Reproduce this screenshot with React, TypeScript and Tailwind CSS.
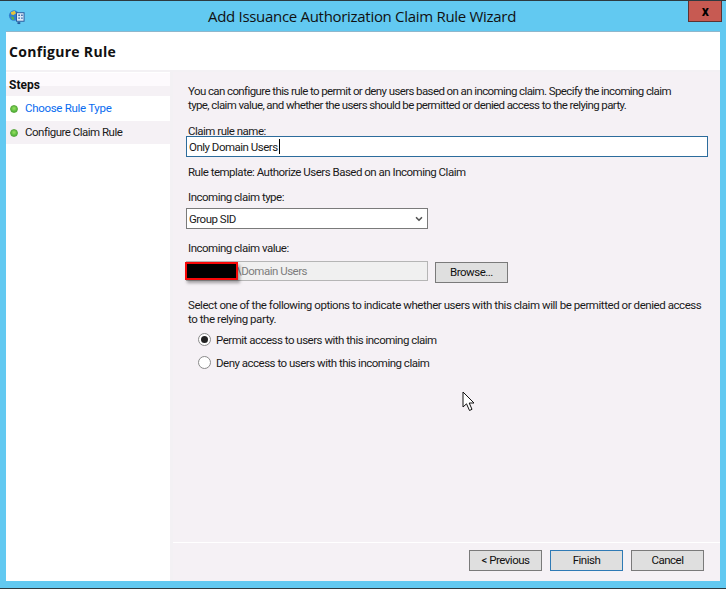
import { ChevronDown } from "lucide-react";

function WizardIcon() {
  return (
    <svg width="17" height="17" viewBox="0 0 18 18" className="shrink-0">
      <circle cx="6.5" cy="8" r="5.5" fill="#2f7fd0" />
      <path d="M3 4.5 L7 3 L8.5 5.5 L6 7.5 L3.5 7 Z" fill="#e8c53a" />
      <path d="M3 9 L6 9.5 L6.5 12.5 L4.5 12.5 Z" fill="#58b14a" />
      <rect x="9" y="5" width="8" height="9" fill="#dbe9f7" stroke="#23579c" />
      <path d="M11 7h1.5v1.5H11zM14 7h1.5v1.5H14zM11 10h1.5v1.5H11zM14 10h1.5v1.5H14z" fill="#23579c" />
      <path d="M10 15h3v2h-3z" fill="#23579c" />
    </svg>
  );
}

function Dot() {
  return (
    <span className="h-[8px] w-[8px] shrink-0 rounded-full border border-[#5aa83c] bg-[radial-gradient(circle_at_50%_40%,#9ae05f,#35a52e)]" />
  );
}

function Radio({ checked, label }: { checked?: boolean; label: string }) {
  return (
    <div className="flex h-[15px] items-center gap-[5px]">
      <span className="flex h-[13px] w-[13px] shrink-0 items-center justify-center rounded-full border border-[#8a8a8a] bg-white">
        {checked ? <span className="h-[7px] w-[7px] rounded-full bg-[#222]" /> : null}
      </span>
      <span>{label}</span>
    </div>
  );
}

function Btn({ label, primary }: { label: string; primary?: boolean }) {
  return (
    <button
      className={`h-[21px] w-[73px] border bg-[#dfdfdf] leading-none text-[#111] ${
        primary ? "border-[#2f7ab5]" : "border-[#7a7a7a]"
      }`}
    >
      {label}
    </button>
  );
}

export default function App() {
  return (
    <div className="flex h-[589px] w-[726px] flex-col overflow-hidden border-t border-[#2d3a40] bg-[#62c9f1] font-['Roboto',sans-serif] text-[11.5px] leading-[14px] tracking-[-0.5px] text-[#1a1a1a]">
      {/* title bar */}
      <div className="flex h-[30px] shrink-0">
        <div className="flex w-[688px] items-center pl-[8px]">
          <WizardIcon />
          <div className="flex-1 pl-[11px] text-center font-['Open_Sans',sans-serif] text-[15px] tracking-[-0.3px] text-[#111]">
            Add Issuance Authorization Claim Rule Wizard
          </div>
        </div>
        <div className="flex h-[21px] w-[34px] items-center justify-center border border-t-0 border-[#5c3232] bg-[#c75a52] text-[14px] leading-none font-bold text-black">
          x
        </div>
      </div>

      {/* window client */}
      <div className="ml-[6px] flex h-[550px] w-[714px] flex-col border-t border-[#8fb7cc] bg-white">
        <div className="flex h-[38px] shrink-0 items-center pl-[3px] pt-[2px] font-['Open_Sans',sans-serif] text-[14px] font-bold tracking-[0.3px] text-[#111]">
          Configure Rule
        </div>
        <div className="h-[2px] shrink-0 bg-[#f3f1f4]" />
        <div className="flex min-h-0 flex-1">
          {/* steps */}
          <div className="w-[164px] shrink-0 pt-[1px]">
            <div className="h-[23px] bg-[linear-gradient(#fdfafd_0,#fdfafd_13px,#f5f1f5_13px)] pl-[3px] pt-[5px] text-[12px] font-bold tracking-[0px] text-[#111]">
              Steps
            </div>
            <div className="flex h-[25px] items-center gap-[7px] pl-[4px] tracking-[-0.3px] text-[#0a6cf0]">
              <Dot />
              <span className="-mt-[2px]">Choose Rule Type</span>
            </div>
            <div className="flex h-[23px] items-center gap-[7px] bg-[#f5f1f5] pl-[4px]">
              <Dot />
              <span className="-mt-[2px]">Configure Claim Rule</span>
            </div>
          </div>
          <div className="w-[3px] shrink-0 bg-[#f3f1f4]" />

          {/* main panel */}
          <div className="relative flex min-w-0 flex-1 flex-col bg-[#f5f1f5]">
            <div className="flex-1 pl-[15px] pt-[12px]">
              <p className="tracking-[-0.6px]">
                You can configure this rule to permit or deny users based on an incoming claim. Specify the incoming claim
                <br />
                type, claim value, and whether the users should be permitted or denied access to the relying party.
              </p>
              <div className="mt-[12px]">Claim rule name:</div>
              <div className="-ml-[2px] -mt-[2px] flex h-[21px] w-[522px] items-center border border-[#2c6c9c] bg-white pl-[2px]">
                Only Domain Users
                <span className="ml-[1px] h-[15px] w-px bg-black" />
              </div>
              <div className="mt-[8px]">Rule template: Authorize Users Based on an Incoming Claim</div>
              <div className="mt-[11px]">Incoming claim type:</div>
              <div className="-ml-[2px] mt-[4px] flex h-[21px] w-[242px] items-center justify-between border border-[#7a7a7a] bg-white pl-[2px] pr-[3px]">
                Group SID
                <ChevronDown size={10} strokeWidth={4} className="text-[#555]" />
              </div>
              <div className="mt-[12px]">Incoming claim value:</div>
              <div className="-ml-[2px] mt-[6px] flex items-start gap-[7px]">
                <div className="relative flex h-[20px] w-[242px] items-center border border-[#b5b5b5] bg-[#f0f0f0] pl-[50px] text-[#7d7d7d]">
                  \Domain Users
                  <div className="absolute -left-[2px] top-0 h-[18px] w-[53px] border-2 border-[#f80808] bg-black shadow-[2px_3px_3px_rgba(0,0,0,0.35)]" />
                </div>
                <button className="mt-px h-[21px] w-[73px] border border-[#7a7a7a] bg-[#dfdfdf] leading-none text-[#111]">
                  Browse...
                </button>
              </div>
              <p className="mt-[15px] tracking-[-0.44px]">
                Select one of the following options to indicate whether users with this claim will be permitted or denied access
                <br />
                to the relying party.
              </p>
              <div className="mt-[6px] flex flex-col gap-[8px] pl-[10px]">
                <Radio checked label="Permit access to users with this incoming claim" />
                <Radio label="Deny access to users with this incoming claim" />
              </div>
            </div>
            <div className="h-[1px] shrink-0 bg-white" />
            <div className="flex h-[38px] shrink-0 justify-end gap-[8px] pr-[16px] pt-[7px]">
              <Btn label="< Previous" />
              <Btn primary label="Finish" />
              <Btn label="Cancel" />
            </div>

            {/* mouse pointer */}
            <svg width="14" height="22" viewBox="0 0 14 22" className="absolute left-[289px] top-[319px]">
              <path d="M1 1 L1 16 L4.5 12.8 L7.5 19.5 L10 18.3 L7.2 12 L12 12 Z" fill="#fff" stroke="#111" strokeWidth="1" />
            </svg>
          </div>
        </div>
      </div>
      <div className="flex-1" />
      <div className="h-[1px] shrink-0 bg-[#2d3a40]" />
    </div>
  );
}
